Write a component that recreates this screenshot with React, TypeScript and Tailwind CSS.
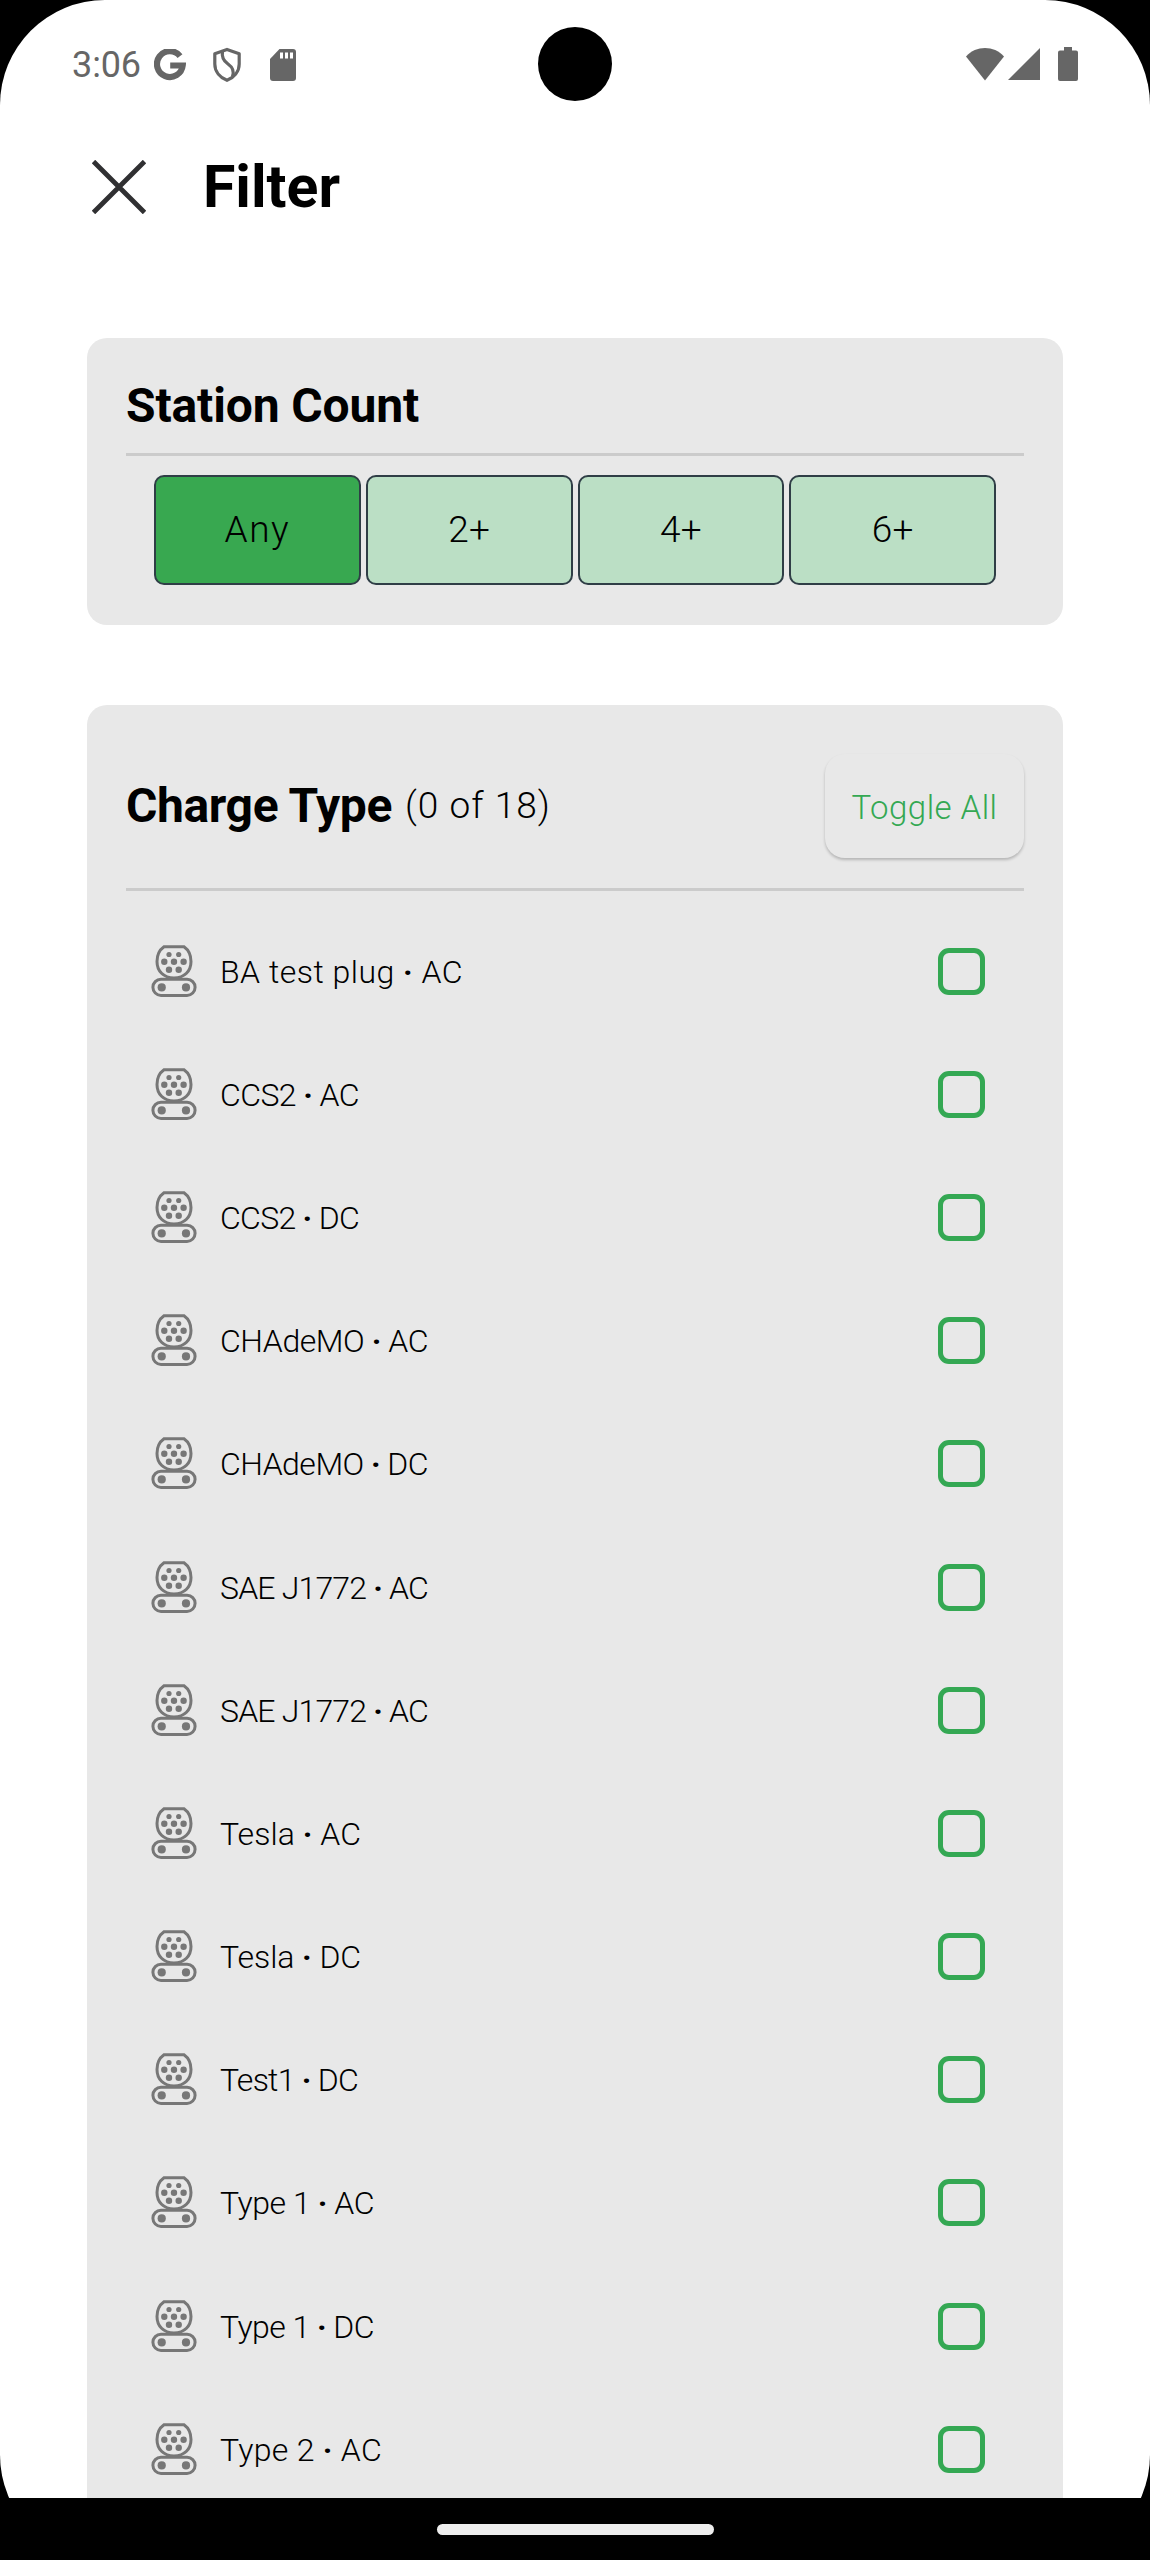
import { useLayoutEffect, useRef, useState } from "react";

// Single-line label whose tracking is adjusted so the text spans a given width.
function Fit({ text, width, className }: { text: string; width: number; className: string }) {
  const ref = useRef<HTMLSpanElement>(null);
  const [tracking, setTracking] = useState(0);
  useLayoutEffect(() => {
    const natural = ref.current!.getBoundingClientRect().width;
    setTracking((t) => t + (width - natural) / text.length);
  }, [text, width]);
  const parts = text.split("·");
  return (
    <span ref={ref} className={"inline-block whitespace-pre " + className} style={{ letterSpacing: tracking }}>
      {parts[0]}
      {parts.length > 1 && <span className="font-bold">·</span>}
      {parts[1]}
    </span>
  );
}

const counts = [
  { label: "Any", width: 66 },
  { label: "2+", width: 42 },
  { label: "4+", width: 42 },
  { label: "6+", width: 42 },
];

const plugs = [
  { label: "BA test plug · AC", width: 243 },
  { label: "CCS2 · AC", width: 139 },
  { label: "CCS2 · DC", width: 139 },
  { label: "CHAdeMO · AC", width: 208 },
  { label: "CHAdeMO · DC", width: 208 },
  { label: "SAE J1772 · AC", width: 208 },
  { label: "SAE J1772 · AC", width: 208 },
  { label: "Tesla · AC", width: 141 },
  { label: "Tesla · DC", width: 141 },
  { label: "Test1 · DC", width: 138 },
  { label: "Type 1 · AC", width: 154 },
  { label: "Type 1 · DC", width: 154 },
  { label: "Type 2 · AC", width: 162 },
];

function PlugIcon() {
  return (
    <svg className="h-[52px] w-[46px] shrink-0" viewBox="0 0 46 52" fill="none" stroke="#777" strokeWidth="3">
      <path d="M13 1.8H33C37.500 5 40 10.500 40 16.500C40 26 33.500 33 23 33S6 26 6 16.500C6 10.500 8.500 5 13 1.800Z" />
      <rect x="1.900" y="34.300" width="42.200" height="16.100" rx="8.050" />
      <g fill="#777" stroke="none">
        <circle cx="18" cy="9.500" r="2.600" />
        <circle cx="27.700" cy="9.500" r="2.600" />
        <circle cx="13.300" cy="16.700" r="3.200" />
        <circle cx="23" cy="16.700" r="3.200" />
        <circle cx="32.600" cy="16.700" r="3.200" />
        <circle cx="18" cy="24.700" r="3.200" />
        <circle cx="27.700" cy="24.700" r="3.200" />
        <circle cx="10.700" cy="42.400" r="4.100" />
        <circle cx="35" cy="42.400" r="4.100" />
      </g>
    </svg>
  );
}

function StatusBar() {
  return (
    <div className="relative flex h-[128px] items-center text-[#666]">
      <Fit text="3:06" width={69} className="ml-[72px] pt-[2px] font-[Roboto] text-[36px] leading-[40px]" />
      <svg className="ml-[13px] mt-px h-[32px] w-[32px]" viewBox="0 0 32 32" fill="none" stroke="currentColor" strokeWidth="6.200">
        <path d="M26 7.100A12.900 12.900 0 1 0 28.700 16.500H16.200" />
      </svg>
      <svg className="ml-[26px] mt-px h-[36px] w-[30px]" viewBox="0 0 30 36" fill="none" stroke="currentColor" strokeWidth="3.200" strokeLinejoin="round">
        <path d="M15 2.400L27.200 6.800V17C27.200 24.500 22 30.500 15 33.300C8 30.500 2.800 24.500 2.800 17V6.800Z" />
        <path d="M10.500 4.500C9.500 10 11 13.500 16 17C21 20.500 22.500 24 20.500 29.500" />
      </svg>
      <svg className="ml-[28px] mt-[2px] h-[32px] w-[26px]" viewBox="0 0 26 32" fill="currentColor">
        <path d="M9.500 0H23a3 3 0 0 1 3 3V29a3 3 0 0 1-3 3H3a3 3 0 0 1-3-3V10Z" />
        <path d="M10 3.500h3v6h-3zM15 3.500h3v6h-3zM20 3.500h3v6h-3z" fill="#fff" />
      </svg>
      <div className="absolute left-[538px] top-[27px] h-[74px] w-[74px] rounded-full bg-black" />
      <svg className="ml-auto h-[33px] w-[38px]" viewBox="0 0 38 33" fill="currentColor">
        <path d="M0 8.500C10-2.800 28-2.800 38 8.500L19 32.500Z" />
      </svg>
      <svg className="ml-[4px] h-[32px] w-[32px]" viewBox="0 0 32 32" fill="currentColor">
        <path d="M32 0V32H0Z" />
      </svg>
      <svg className="ml-[18px] mr-[72px] h-[34px] w-[20px]" viewBox="0 0 20 34" fill="currentColor">
        <path d="M6 0H14V3.500H18a2 2 0 0 1 2 2V32a2 2 0 0 1-2 2H2a2 2 0 0 1-2-2V5.500a2 2 0 0 1 2-2H6Z" />
      </svg>
    </div>
  );
}

export default function App() {
  return (
    <div className="flex h-[2560px] w-[1150px] flex-col overflow-hidden bg-black font-[Roboto] text-black">
      <div className="h-[2498px] overflow-hidden">
        <div className="h-[2560px] overflow-hidden rounded-[105px] bg-white">
          <StatusBar />
          <header className="flex h-[118px] items-center pl-[92px]">
            <svg className="h-[54px] w-[54px]" viewBox="0 0 54 54" stroke="#303032" strokeWidth="4.800">
              <path d="M1.500 1.500L52.500 52.500M52.500 1.500L1.500 52.500" />
            </svg>
            <Fit text="Filter" width={137} className="ml-[57px] text-[59px] font-bold leading-[70px]" />
          </header>

          <section className="mx-[87px] mt-[92px] h-[287px] rounded-[20px] bg-[#e8e8e8] px-[39px]">
            <div className="flex h-[118px] items-center border-b-[3px] border-[#cbcbcb] pt-[20px]">
              <Fit text="Station Count" width={293} className="text-[48px] font-bold leading-[56px]" />
            </div>
            <div className="mt-[19px] grid h-[110px] grid-cols-4 gap-[5px] px-[28px]">
              {counts.map((c, i) => (
                <button
                  key={c.label}
                  className={
                    "flex items-center justify-center rounded-[10px] border-2 border-[#2f3e46] " +
                    (i === 0 ? "bg-[#38a850]" : "bg-[#bbdfc5]")
                  }
                >
                  <Fit text={c.label} width={c.width} className="text-[37px] font-light leading-[44px]" />
                </button>
              ))}
            </div>
          </section>

          <section className="mx-[87px] mt-[80px] rounded-t-[20px] bg-[#e8e8e8] px-[39px]">
            <div className="flex h-[186px] items-center border-b-[3px] border-[#cbcbcb] pt-[18px]">
              <Fit text="Charge Type" width={266} className="text-[48px] font-bold leading-[56px]" />
              <Fit text="(0 of 18)" width={146} className="ml-[13px] text-[37px] font-light leading-[56px]" />
              <button className="ml-auto flex h-[104px] w-[199px] items-center justify-center rounded-[20px] pt-[4px] shadow-[0_2px_3px_rgba(0,0,0,0.22)]">
                <Fit text="Toggle All" width={146} className="text-[33px] font-light leading-[40px] text-[#34a853]" />
              </button>
            </div>
            <ul className="pt-[18px]">
              {plugs.map((p, i) => (
                <li key={i} className="flex h-[123.2px] items-center pl-[25px] pr-[39px]">
                  <PlugIcon />
                  <Fit text={p.label} width={p.width} className="ml-[23px] pt-[2px] text-[32px] font-light leading-[40px]" />
                  <span className="ml-auto mt-px h-[47px] w-[47px] rounded-[11px] border-[5px] border-[#34a853]" />
                </li>
              ))}
            </ul>
          </section>
        </div>
      </div>
      <div className="flex h-[62px] items-center justify-center">
        <div className="h-[11px] w-[277px] rounded-full bg-[#eee]" />
      </div>
    </div>
  );
}
